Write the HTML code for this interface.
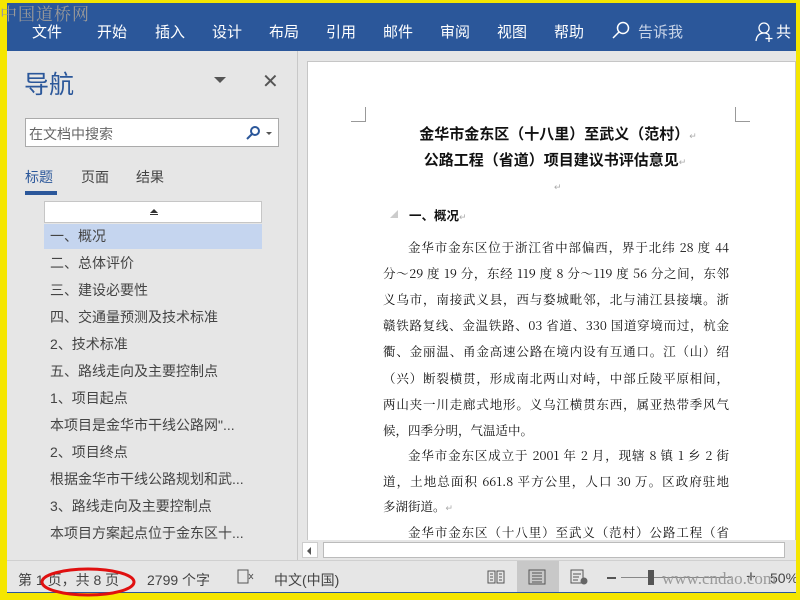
<!DOCTYPE html>
<html><head><meta charset="utf-8"><style>
*{margin:0;padding:0;box-sizing:border-box}
body{width:800px;height:600px;position:relative;overflow:hidden;background:#f5e600;font-family:"Liberation Sans","Noto Sans CJK SC",sans-serif}
.win{position:absolute;left:7px;top:3px;width:789px;height:590px;background:#e6e6e6;overflow:hidden}
.rib{position:absolute;left:0;top:0;width:789px;height:48px;background:#2b579a;color:#fff;font-size:15px}
.rib span{position:absolute;top:18px}
.nav{position:absolute;left:0;top:48px;width:291px;height:509px;background:#e6e6e6;border-right:1px solid #c8c8c8}
.abs{position:absolute}
.item{position:absolute;left:43px;font-size:14px;color:#444;white-space:nowrap}
.page{position:absolute;left:300px;top:58px;width:489px;height:480px;background:#fff;border:1px solid #c6c6c6;font-family:"Noto Serif CJK SC","Liberation Serif",serif;color:#111}
.ln{position:absolute;left:75px;width:346px;font-size:12.5px;text-align:justify;text-align-last:justify;white-space:nowrap}
.status{position:absolute;left:0;top:557px;width:789px;height:33px;background:#e6e6e6;border-top:1px solid #d0d0d0;font-size:14px;color:#444}
.status span{position:absolute;top:9px}
</style></head><body>
<div class="abs" style="left:0;top:0;font-size:17px;color:#999;font-family:'Noto Serif CJK SC',serif;letter-spacing:1px;z-index:5">中国道桥网</div>
<div class="win">
<div class="rib">
<span style="left:25px">文件</span><span style="left:90px">开始</span><span style="left:148px">插入</span><span style="left:205px">设计</span><span style="left:262px">布局</span><span style="left:319px">引用</span><span style="left:376px">邮件</span><span style="left:433px">审阅</span><span style="left:490px">视图</span><span style="left:547px">帮助</span>
<svg class="abs" style="left:605px;top:18px" width="18" height="18"><circle cx="11" cy="7" r="5.5" fill="none" stroke="#fff" stroke-width="1.5"/><line x1="7" y1="11" x2="1" y2="17" stroke="#fff" stroke-width="1.5"/></svg>
<span style="left:631px;color:#c8d4e8">告诉我</span>
<svg class="abs" style="left:748px;top:19px" width="20" height="20"><circle cx="9" cy="6" r="5" fill="none" stroke="#fff" stroke-width="1.3"/><path d="M1 19 Q2 11 9 11 Q12 11 14 13" fill="none" stroke="#fff" stroke-width="1.3"/><path d="M14 13v7M10.5 16.5h7" stroke="#fff" stroke-width="1.3"/></svg>
<span style="left:769px">共</span>
</div>
<div class="nav">
<div class="abs" style="left:17px;top:14px;font-size:25px;color:#2b579a">导航</div>
<div class="abs" style="left:207px;top:26px;width:0;height:0;border-left:6px solid transparent;border-right:6px solid transparent;border-top:6px solid #555"></div>
<div class="abs" style="left:255px;top:18px;font-size:20px;color:#555">✕</div>
<div class="abs" style="left:18px;top:67px;width:254px;height:29px;background:#fff;border:1px solid #aaa"><span class="abs" style="left:3px;top:5px;font-size:14px;color:#666">在文档中搜索</span>
<svg class="abs" style="left:220px;top:7px" width="14" height="14"><circle cx="9" cy="5" r="4" fill="none" stroke="#2b579a" stroke-width="2"/><line x1="6" y1="8" x2="1" y2="13" stroke="#2b579a" stroke-width="2"/></svg>
<div class="abs" style="left:240px;top:13px;border-left:3px solid transparent;border-right:3px solid transparent;border-top:3px solid #555"></div></div>
<div class="abs" style="left:18px;top:116px;font-size:14px;color:#2b579a">标题</div>
<div class="abs" style="left:74px;top:116px;font-size:14px;color:#444">页面</div>
<div class="abs" style="left:129px;top:116px;font-size:14px;color:#444">结果</div>
<div class="abs" style="left:18px;top:140px;width:32px;height:4px;background:#2b579a"></div>
<div class="abs" style="left:37px;top:150px;width:218px;height:22px;background:#fff;border:1px solid #c6c6c6"><div class="abs" style="left:105px;top:7px;border-left:4px solid transparent;border-right:4px solid transparent;border-bottom:4px solid #333"></div><div class="abs" style="left:105px;top:12px;width:8px;height:1px;background:#333"></div></div>
<div class="abs" style="left:37px;top:173px;width:218px;height:25px;background:#c5d5ef"></div>
<div class="item" style="top:175px">一、概况</div>
<div class="item" style="top:202px">二、总体评价</div>
<div class="item" style="top:229px">三、建设必要性</div>
<div class="item" style="top:256px">四、交通量预测及技术标准</div>
<div class="item" style="top:283px">2、技术标准</div>
<div class="item" style="top:310px">五、路线走向及主要控制点</div>
<div class="item" style="top:337px">1、项目起点</div>
<div class="item" style="top:364px">本项目是金华市干线公路网"...</div>
<div class="item" style="top:391px">2、项目终点</div>
<div class="item" style="top:418px">根据金华市干线公路规划和武...</div>
<div class="item" style="top:445px">3、路线走向及主要控制点</div>
<div class="item" style="top:472px">本项目方案起点位于金东区十...</div>
</div>
<div class="page">
<div class="abs" style="left:43px;top:45px;width:15px;height:15px;border-right:1px solid #999;border-bottom:1px solid #999"></div>
<div class="abs" style="left:427px;top:45px;width:15px;height:15px;border-left:1px solid #999;border-bottom:1px solid #999"></div>
<div class="abs" style="left:0;width:500px;top:61px;text-align:center;font-weight:bold;font-size:15px;font-family:'Noto Sans CJK SC',sans-serif">金华市金东区（十八里）至武义（范村）<span style="color:#aaa;font-weight:normal;font-size:9px">↵</span></div>
<div class="abs" style="left:0;width:494px;top:87px;text-align:center;font-weight:bold;font-size:15px;font-family:'Noto Sans CJK SC',sans-serif">公路工程（省道）项目建议书评估意见<span style="color:#aaa;font-weight:normal;font-size:9px">↵</span></div>
<div class="abs" style="left:246px;top:118px;color:#aaa;font-size:9px">↵</div>
<div class="abs" style="left:82px;top:148px;width:0;height:0;border-left:8px solid transparent;border-bottom:8px solid #ccc"></div>
<div class="abs" style="left:101px;top:143px;font-weight:bold;font-size:12.5px;font-family:'Noto Sans CJK SC',sans-serif">一、概况<span style="color:#aaa;font-weight:normal;font-size:9px">↵</span></div>
<div class="ln" style="top:176px;left:100px;width:321px">金华市金东区位于浙江省中部偏西，界于北纬 28 度 44</div>
<div class="ln" style="top:202px">分～29 度 19 分，东经 119 度 8 分～119 度 56 分之间，东邻</div>
<div class="ln" style="top:228px">义乌市，南接武义县，西与婺城毗邻，北与浦江县接壤。浙</div>
<div class="ln" style="top:254px">赣铁路复线、金温铁路、03 省道、330 国道穿境而过，杭金</div>
<div class="ln" style="top:280px">衢、金丽温、甬金高速公路在境内设有互通口。江（山）绍</div>
<div class="ln" style="top:307px">（兴）断裂横贯，形成南北两山对峙，中部丘陵平原相间，</div>
<div class="ln" style="top:333px">两山夹一川走廊式地形。义乌江横贯东西，属亚热带季风气</div>
<div class="ln" style="top:359px;text-align-last:left">候，四季分明，气温适中。</div>
<div class="ln" style="top:384px;left:100px;width:321px">金华市金东区成立于 2001 年 2 月，现辖 8 镇 1 乡 2 街</div>
<div class="ln" style="top:410px">道，土地总面积 661.8 平方公里，人口 30 万。区政府驻地</div>
<div class="ln" style="top:435px;text-align-last:left">多湖街道。<span style="color:#aaa;font-size:9px">↵</span></div>
<div class="ln" style="top:461px;left:100px;width:321px">金华市金东区（十八里）至武义（范村）公路工程（省</div>
</div>
<div class="abs" style="left:293px;top:537px;width:496px;height:20px;background:#e6e6e6"><div class="abs" style="left:2px;top:2px;width:16px;height:16px;background:#fff;border:1px solid #ccc"><div class="abs" style="left:4px;top:4px;border-top:4px solid transparent;border-bottom:4px solid transparent;border-right:4px solid #555"></div></div><div class="abs" style="left:23px;top:2px;width:462px;height:16px;background:#fff;border:1px solid #bbb"></div></div>
<div class="status">
<span style="left:11px">第 1 页，共 8 页</span><span style="left:140px">2799 个字</span>
<svg class="abs" style="left:230px;top:8px" width="18" height="16"><rect x="1" y="1" width="10" height="13" fill="none" stroke="#555"/><path d="M12 5l4 5M16 5l-4 5" stroke="#555"/></svg>
<span style="left:267px">中文(中国)</span>
<svg class="abs" style="left:480px;top:8px" width="18" height="16"><path d="M1 2h7v12H1zM10 2h7v12h-7zM3 5h3M3 8h3M3 11h3M12 5h3M12 8h3M12 11h3" fill="none" stroke="#555"/></svg>
<div class="abs" style="left:510px;top:0;width:42px;height:32px;background:#c8c8c8"></div>
<svg class="abs" style="left:521px;top:8px" width="18" height="16"><path d="M1 1h16v14H1zM4 4h10M4 7h10M4 10h10M4 13h10" fill="none" stroke="#555"/></svg>
<svg class="abs" style="left:563px;top:8px" width="18" height="16"><path d="M1 1h12v13H1zM3 5h8M3 8h6M3 11h5" fill="none" stroke="#555"/><circle cx="14" cy="12" r="3.5" fill="#666"/></svg>
<div class="abs" style="left:600px;top:16px;width:9px;height:2px;background:#555"></div>
<div class="abs" style="left:614px;top:16px;width:110px;height:1px;background:#888"></div>
<div class="abs" style="left:641px;top:9px;width:6px;height:15px;background:#555"></div>
<span style="left:739px;top:6px;font-size:17px">+</span><span style="left:763px">50%</span>
<div class="abs" style="left:0;top:31px;width:789px;height:2px;background:#2b579a"></div>
</div>
<div class="abs" style="left:655px;top:566px;font-family:'Liberation Serif',serif;font-size:17px;color:#999">www.cndao.com</div>
</div>
<svg class="abs" style="left:38px;top:564px" width="100" height="36"><ellipse cx="50" cy="18" rx="46" ry="13" fill="none" stroke="#e01010" stroke-width="3"/></svg>
</body></html>
